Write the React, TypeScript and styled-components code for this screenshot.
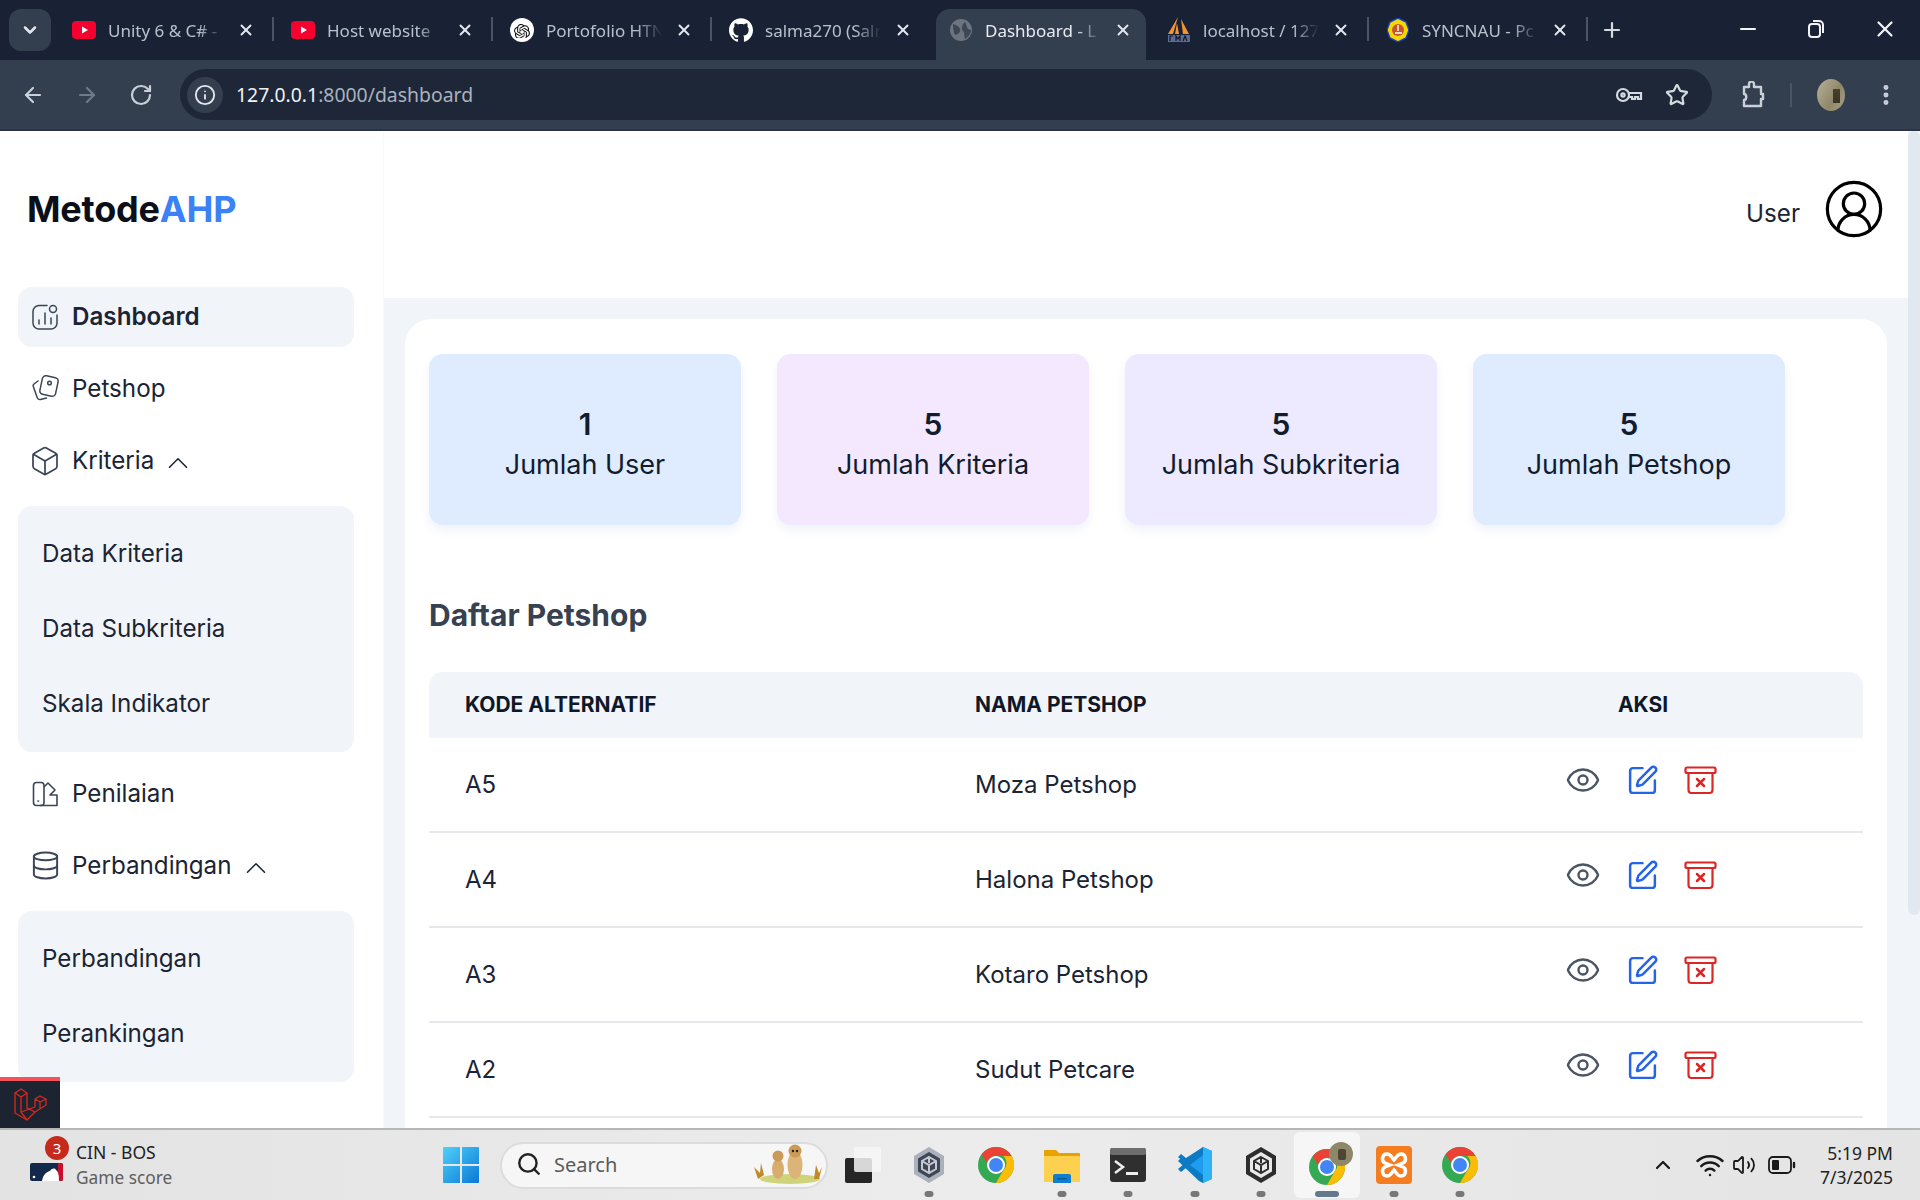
import React from 'react';
import styled, { createGlobalStyle } from 'styled-components';
import {
  ArrowLeft,
  ArrowRight,
  Box,
  ChevronDown,
  ChevronUp,
  CircleUserRound,
  Database,
  EllipsisVertical,
  Eye,
  Info,
  Minus,
  Plus,
  RotateCw,
  Search,
  SquarePen,
  Star,
  Volume2,
  Wifi,
  X,
} from 'lucide-react';
import { SiGithub, SiOpenai } from 'react-icons/si';

const GlobalStyle = createGlobalStyle`
  html, body {
    margin: 0;
    padding: 0;
    width: 1920px;
    height: 1200px;
    overflow: hidden;
    background: #fff;
  }
  * { box-sizing: border-box; }
`;

const Screen = styled.div`
  position: relative;
  width: 1920px;
  height: 1200px;
  display: flex;
  flex-direction: column;
  font-family: Inter, 'Liberation Sans', sans-serif;
  color: #111c2d;
`;

/* browser chrome */
const TabStrip = styled.div`
  height: 60px;
  background: #182234;
  display: flex;
  align-items: flex-end;
  padding-left: 9px;
  flex-shrink: 0;
`;

const TabSearch = styled.div`
  width: 42px;
  height: 42px;
  margin: 0 4px 9px 0;
  border-radius: 12px;
  background: #333e4f;
  color: #e4e8ee;
  display: flex;
  align-items: center;
  justify-content: center;
`;

const Tab = styled.div<{ $active?: boolean; $sep?: boolean }>`
  position: relative;
  width: ${(p) => (p.$active ? '210px' : '219px')};
  height: 51px;
  margin: ${(p) => (p.$active ? '0 4px 0 5px' : '0')};
  padding: ${(p) => (p.$active ? '0 0 9px 13px' : '0 0 9px 17px')};
  display: flex;
  align-items: center;
  color: ${(p) => (p.$active ? '#e8ebf0' : '#b9c0cb')};
  background: ${(p) => (p.$active ? '#333e4f' : 'transparent')};
  border-radius: ${(p) => (p.$active ? '14px 14px 0 0' : '0')};
  font-family: 'Noto Sans', sans-serif;
  font-size: 17px;
  flex-shrink: 0;
  &::after {
    content: '';
    display: ${(p) => (p.$sep ? 'block' : 'none')};
    position: absolute;
    right: 0;
    top: 8px;
    height: 24px;
    width: 2px;
    background: #4a5464;
  }
`;

const TabIcon = styled.span`
  width: 24px;
  height: 24px;
  display: flex;
  align-items: center;
  justify-content: center;
  flex-shrink: 0;
`;

const TabTitle = styled.span`
  width: 116px;
  margin-left: 12px;
  white-space: nowrap;
  overflow: hidden;
  -webkit-mask-image: linear-gradient(to right, #000 78%, transparent 100%);
  mask-image: linear-gradient(to right, #000 78%, transparent 100%);
`;

const TabClose = styled.span`
  margin-left: 13px;
  color: #e4e8ee;
  display: flex;
`;

const NewTab = styled.span`
  margin: 0 0 9px 12px;
  color: #d5dae1;
  height: 42px;
  display: flex;
  align-items: center;
`;

const WindowButtons = styled.div`
  margin-left: auto;
  height: 51px;
  padding: 0 22px 12px 0;
  display: flex;
  align-items: center;
  gap: 46px;
  color: #f2f4f7;
`;

const Toolbar = styled.div`
  height: 71px;
  background: #333e4f;
  display: flex;
  align-items: flex-start;
  padding: 9px 0 0 21px;
  border-bottom: 2px solid #2a3444;
  color: #c9d0da;
  flex-shrink: 0;
`;

const NavIcons = styled.div`
  display: flex;
  align-items: center;
  gap: 30px;
  height: 51px;
  width: 159px;
`;

const Omnibox = styled.div`
  width: 1532px;
  height: 51px;
  border-radius: 26px;
  background: #1d2738;
  display: flex;
  align-items: center;
  padding: 0 23px 0 7px;
`;

const SiteInfo = styled.span`
  width: 36px;
  height: 36px;
  border-radius: 50%;
  background: #333e4f;
  display: flex;
  align-items: center;
  justify-content: center;
  color: #e4e8ee;
  flex-shrink: 0;
`;

const Url = styled.span`
  margin-left: 13px;
  font-family: 'Noto Sans', sans-serif;
  font-size: 19.4px;
  color: #eef1f5;
  span {
    color: #aab2be;
  }
`;

const OmniActions = styled.div`
  margin-left: auto;
  display: flex;
  align-items: center;
  gap: 22px;
  color: #d5dae1;
`;

const ToolActions = styled.div`
  display: flex;
  align-items: center;
  height: 51px;
  margin-left: 29px;
`;

const ToolSep = styled.span`
  width: 2px;
  height: 24px;
  background: #4a5464;
  margin: 0 25px;
`;

const Avatar = styled.span`
  width: 28px;
  height: 32px;
  border-radius: 50%;
  background:
    linear-gradient(to bottom, #4a3f2c, #3a3223) 16px 10px / 7px 14px no-repeat,
    linear-gradient(120deg, #b8b298, #8f876a 60%, #a8a287);
  display: block;
  margin-right: 28px;
`;

/* page */
const Page = styled.div`
  flex: 1;
  min-height: 0;
  display: flex;
  overflow: hidden;
`;

const Sidebar = styled.aside`
  width: 384px;
  flex-shrink: 0;
  padding: 0 29px 0 18px;
  background: #fff;
  border-right: 1px solid #f6f8fb;
`;

const Logo = styled.div`
  height: 156px;
  padding: 0 0 0 9px;
  display: flex;
  align-items: center;
  font-size: 36px;
  font-weight: 700;
  letter-spacing: -0.2px;
  color: #0b0f19;
  span {
    color: #3b82f6;
  }
`;

const Nav = styled.nav`
  display: flex;
  flex-direction: column;
  gap: 12px;
`;

const NavItem = styled.div<{ $active?: boolean }>`
  height: 60px;
  padding: 0 14px 1px;
  display: flex;
  align-items: center;
  gap: 14px;
  border-radius: 14px;
  background: ${(p) => (p.$active ? '#f1f5f9' : 'transparent')};
  font-size: 24.2px;
  font-weight: ${(p) => (p.$active ? 600 : 400)};
  color: #1a2434;
`;

const NavIcon = styled.span`
  width: 26px;
  height: 32px;
  display: flex;
  align-items: center;
  justify-content: center;
  color: #3a4557;
  svg {
    flex-shrink: 0;
  }
`;

const Caret = styled.span`
  display: flex;
  margin: 4px 0 0 -7px;
  color: #1a2434;
`;

const SubPanel = styled.div`
  margin-top: 3px;
  padding: 10px 24px 11px;
  background: #f1f5f9;
  border-radius: 14px;
`;

const SubItem = styled.div`
  height: 75px;
  padding-bottom: 1px;
  display: flex;
  align-items: center;
  font-size: 24.2px;
  color: #1a2434;
`;

const Main = styled.main`
  flex: 1;
  min-width: 0;
  display: flex;
  flex-direction: column;
  background: #f1f5f9;
`;

const Header = styled.header`
  height: 167px;
  flex-shrink: 0;
  background: #fff;
  display: flex;
  align-items: center;
  justify-content: flex-end;
  gap: 22px;
  padding: 0 22px 11px 0;
  color: #000;
`;

const UserName = styled.span`
  margin-top: 8px;
  font-size: 24.2px;
  color: #1a2434;
`;

const Content = styled.div`
  flex: 1;
  min-height: 0;
  padding: 21px 21px 0;
`;

const Card = styled.section`
  background: #fff;
  border-radius: 26px 26px 0 0;
  height: 100%;
  padding: 35px 24px 0;
  overflow: hidden;
`;

const Stats = styled.div`
  display: flex;
  gap: 36px;
`;

const Stat = styled.div<{ $bg: string }>`
  width: 312px;
  height: 171px;
  padding-top: 9px;
  border-radius: 14px;
  background: ${(p) => p.$bg};
  box-shadow: 0 5px 10px rgba(100, 130, 190, 0.1);
  display: flex;
  flex-direction: column;
  align-items: center;
  justify-content: center;
`;

const StatNumber = styled.div`
  font-size: 30px;
  font-weight: 600;
  line-height: 42px;
`;

const StatLabel = styled.div`
  font-size: 27px;
  line-height: 40px;
  color: #111c2d;
`;

const Title = styled.h2`
  margin: 69px 0 0;
  font-size: 30px;
  line-height: 42px;
  font-weight: 700;
  color: #364152;
`;

const Table = styled.div`
  margin-top: 36px;
`;

const Row = styled.div<{ $head?: boolean }>`
  display: grid;
  grid-template-columns: 510px 1fr 440px;
  align-items: center;
  padding: 0 0 ${(p) => (p.$head ? '2px' : '1px')} 36px;
  height: ${(p) => (p.$head ? '66px' : '95px')};
  background: ${(p) => (p.$head ? '#f1f5f9' : '#fff')};
  border-radius: ${(p) => (p.$head ? '14px 14px 0 0' : '0')};
  border-bottom: ${(p) => (p.$head ? '0' : '2px solid #e5e7eb')};
  font-size: ${(p) => (p.$head ? '21px' : '24px')};
  font-weight: ${(p) => (p.$head ? 700 : 400)};
  color: ${(p) => (p.$head ? '#0f1828' : '#1a2434')};
`;

const ActionHead = styled.div`
  text-align: center;
`;

const Actions = styled.div`
  display: flex;
  align-items: center;
  gap: 25px;
  padding-left: 142px;
  margin-top: -8px;
`;

const Scrollbar = styled.div`
  width: 12px;
  flex-shrink: 0;
  background: #f1f5f9;
`;

const ScrollThumb = styled.div`
  height: 784px;
  background: #e2e8f0;
  border-radius: 6px;
`;

/* laravel debugbar badge, sits over the sidebar */
const DebugBadge = styled.div`
  position: absolute;
  left: 0;
  top: 1077px;
  width: 60px;
  height: 51px;
  background: #1c2431;
  border-top: 4px solid #f4525c;
  display: flex;
  align-items: center;
  justify-content: center;
`;

/* windows taskbar */
const Taskbar = styled.footer`
  height: 72px;
  flex-shrink: 0;
  background: linear-gradient(to right, #e3e3e3, #ececec 50%, #e4e4e4);
  border-top: 2px solid #b6b6b6;
  display: flex;
  align-items: center;
  font-family: 'Noto Sans', sans-serif;
`;

const Widget = styled.div`
  width: 443px;
  padding-left: 30px;
  display: flex;
  align-items: center;
  position: relative;
`;

const Badge = styled.span`
  position: absolute;
  left: 45px;
  top: -4px;
  width: 24px;
  height: 24px;
  border-radius: 50%;
  background: #c42b1c;
  color: #fff;
  font-size: 15px;
  display: flex;
  align-items: center;
  justify-content: center;
`;

const WidgetText = styled.div`
  margin-left: 13px;
  font-size: 17.5px;
  line-height: 25px;
  color: #222;
  small {
    display: block;
    font-size: 17.3px;
    color: #5d5d5d;
  }
`;

const SearchBox = styled.div`
  width: 328px;
  height: 47px;
  margin-left: 21px;
  border-radius: 24px;
  background: #f6f6f6;
  border: 2px solid #dcdcdc;
  display: flex;
  align-items: center;
  padding: 0 2px 2px 14px;
  font-size: 20px;
  color: #5a5a5a;
  gap: 12px;
  svg:last-child {
    margin-left: auto;
  }
`;

const Dock = styled.div`
  display: flex;
  margin-left: 2px;
`;

const DockItem = styled.div<{ $active?: boolean }>`
  position: relative;
  width: 66.3px;
  height: 66px;
  display: flex;
  align-items: center;
  justify-content: center;
  border-radius: 6px;
  background: ${(p) => (p.$active ? '#f6f6f6' : 'transparent')};
`;

const DockDot = styled.span<{ $active?: boolean }>`
  position: absolute;
  bottom: 1px;
  left: 50%;
  transform: translateX(-50%);
  width: ${(p) => (p.$active ? '24px' : '9px')};
  height: 6px;
  border-radius: 3px;
  background: ${(p) => (p.$active ? '#64788c' : '#777')};
`;

const Tray = styled.div`
  margin-left: auto;
  display: flex;
  align-items: center;
  padding-right: 27px;
  color: #1a1a1a;
`;

const TrayIcon = styled.span<{ $left: number }>`
  display: flex;
  margin-left: ${(p) => p.$left}px;
`;

const Clock = styled.div`
  margin-left: 24px;
  text-align: right;
  font-size: 17.5px;
  line-height: 24px;
  color: #222;
`;

/* drawn icons */
const Youtube = () => (
  <svg width="24" height="18" viewBox="0 0 24 18">
    <rect width="24" height="18" rx="4" fill="#f5002f" />
    <path d="M10 5.5 16 9l-6 3.5z" fill="#fff" />
  </svg>
);

const OpenAiIcon = () => (
  <svg width="24" height="24" viewBox="0 0 24 24">
    <circle cx="12" cy="12" r="12" fill="#fff" />
    <foreignObject x="4" y="4" width="16" height="16">
      <SiOpenai size={16} color="#111" />
    </foreignObject>
  </svg>
);

const Globe = () => (
  <svg width="24" height="24" viewBox="0 0 24 24">
    <circle cx="12" cy="12" r="11" fill="#6b7480" />
    <path d="M4 6c3 1 6 2 7 5s-2 5-4 6-3-7-3-11zm12-2c2 2 1 5 3 7l3 1c0 4-3 7-6 9-1-3 0-6-2-8s-1-7 2-9z" fill="#3d4654" />
  </svg>
);

const PmaIcon = () => (
  <svg width="24" height="26" viewBox="0 0 24 26">
    <path d="M11 0 6 17H1zM14 2l8 15h-6zM10 6l2 11H8z" fill="#f59331" />
    <rect x="1" y="18" width="22" height="7" fill="#5b6b91" />
    <path d="M3 24v-5h3M9 24v-5l2 3 2-3v5M16 24l2-5 2 5" stroke="#10172a" strokeWidth="1.2" fill="none" />
  </svg>
);

const SyncIcon = () => (
  <svg width="22" height="24" viewBox="0 0 22 24">
    <path d="M11 0 19 4 22 12 19 20 11 24 3 20 0 12 3 4z" fill="#f5d800" stroke="#1a3fc0" strokeWidth="1.4" />
    <circle cx="11" cy="12" r="6" fill="#c9552b" />
    <path d="M8 15h7M11 7v6" stroke="#fff" strokeWidth="1.4" />
  </svg>
);

const RestoreIcon = () => (
  <svg width="20" height="20" viewBox="0 0 20 20" fill="none" stroke="currentColor" strokeWidth="2">
    <rect x="3" y="5" width="11" height="13" rx="3" />
    <path d="M7 2h6a4 4 0 0 1 4 4v8" />
  </svg>
);

const KeyIcon = () => (
  <svg width="28" height="24" viewBox="0 0 28 24" fill="none" stroke="currentColor" strokeWidth="2.2">
    <circle cx="8" cy="12" r="6" />
    <circle cx="8" cy="12" r="1.6" />
    <path d="M14 10h12v6h-3v-2h-3v2h-3v-2h-3" />
  </svg>
);

const PuzzleIcon = () => (
  <svg width="24" height="28" viewBox="0 0 24 28" fill="none" stroke="currentColor" strokeWidth="2.4" strokeLinejoin="round">
    <path d="M3 6h5V3a2 2 0 0 1 5 0v3h7v7h2v5h-2v7H3v-6c3 0 3-6 0-6z" />
  </svg>
);

const DashboardIcon = () => (
  <svg width="26" height="26" viewBox="0 0 26 26" fill="none" stroke="currentColor" strokeWidth="1.5" strokeLinecap="round">
    <path d="M15 1.5H7A6 6 0 0 0 1 7.500V19a6 6 0 0 0 6 6h12a6 6 0 0 0 6-6v-8" />
    <circle cx="21" cy="5" r="3.500" />
    <path d="M7 20v-4M13 20V9M19 20v-6" />
  </svg>
);

const PetshopIcon = () => (
  <svg width="27" height="27" viewBox="0 0 27 27" fill="none" stroke="currentColor" strokeWidth="1.5" strokeLinejoin="round">
    <rect x="9" y="1.500" width="16" height="19" rx="3.500" transform="rotate(12 17 11)" />
    <circle cx="17.500" cy="8" r="1.800" />
    <path d="M6 6 2 9a2.500 2.500 0 0 0-.5 3L5 22a3 3 0 0 0 3.500 2.500l6-1.500" strokeLinecap="round" />
  </svg>
);

const PenilaianIcon = () => (
  <svg width="26" height="26" viewBox="0 0 26 26" fill="none" stroke="currentColor" strokeWidth="1.6" strokeLinejoin="round">
    <rect x="1.500" y="1.500" width="10.500" height="23" rx="3" />
    <path d="M12 6l4-4 7 7-5 5h7v10.500H8" />
    <path d="M6 20h.5" strokeLinecap="round" />
  </svg>
);

const TrashIcon = () => (
  <svg width="33" height="29" viewBox="0 0 33 29" fill="none" stroke="#dc2626" strokeWidth="2.200" strokeLinejoin="round" strokeLinecap="round">
    <rect x="1.500" y="1.500" width="30" height="5.500" rx="1.500" />
    <path d="M4.500 7v17a3 3 0 0 0 3 3h18a3 3 0 0 0 3-3V7" />
    <path d="M13 13l7 7M20 13l-7 7" strokeWidth="2.500" />
  </svg>
);

const LaravelIcon = () => (
  <svg width="33" height="33" viewBox="0 0 33 33" fill="none" stroke="#d9291c" strokeWidth="1.300" strokeLinejoin="round">
    <path d="M1 5l6-4 6 4v15l8 4-8 8-12-7z" />
    <path d="M1 5l6 4 6-4M7 9v15l6 8M7 24l14-5" />
    <path d="M21 11l5-3 6 3v6l-11 7M21 11l5 3 6-3M26 14v6M21 11v8" />
  </svg>
);

const MlbIcon = () => (
  <svg width="33" height="18" viewBox="0 0 33 18" style={{ marginTop: 14 }}>
    <rect width="33" height="18" rx="2" fill="#13294b" />
    <path d="M28 0h3a2 2 0 0 1 2 2v14a2 2 0 0 1-2 2h-3z" fill="#c8102e" />
    <path d="M12 18c1-6 4-9 8-10 2-3 5-3 6-1 2 1 3 5 3 11z" fill="#fff" />
    <circle cx="4" cy="14" r="1.300" fill="#fff" />
  </svg>
);

const WindowsLogo = () => (
  <svg width="36" height="36" viewBox="0 0 36 36">
    <defs>
      <linearGradient id="win" x1="0" y1="0" x2="1" y2="1">
        <stop offset="0" stopColor="#4fd0fb" />
        <stop offset="1" stopColor="#0a78d6" />
      </linearGradient>
    </defs>
    <path d="M0 1a1 1 0 0 1 1-1h16v17H0zM19 0h16a1 1 0 0 1 1 1v16H19zM0 19h17v17H1a1 1 0 0 1-1-1zM19 19h17v16a1 1 0 0 1-1 1H19z" fill="url(#win)" />
  </svg>
);

const Meerkats = () => (
  <svg width="72" height="42" viewBox="0 0 72 42">
    <ellipse cx="38" cy="36" rx="30" ry="5" fill="#cfd47a" />
    <path d="M6 36 2 24l6 6 1-10 3 12zM62 36l2-14 3 8 3-6-3 12z" fill="#c08a26" />
    <ellipse cx="26" cy="26" rx="6" ry="10" fill="#d7ac6d" />
    <circle cx="26" cy="13" r="5.500" fill="#cb9a58" />
    <ellipse cx="43" cy="22" rx="7.500" ry="14" fill="#dcb477" />
    <circle cx="43" cy="8" r="6.500" fill="#cb9a58" />
    <circle cx="41" cy="8" r="1.200" fill="#222" />
    <circle cx="45" cy="8" r="1.200" fill="#222" />
  </svg>
);

const StoreIcon = () => (
  <svg width="36" height="36" viewBox="0 0 36 36">
    <rect x="0" y="11" width="27" height="25" rx="2" fill="#262626" />
    <rect x="9" y="0" width="27" height="25" rx="2" fill="#f7f7f7" opacity="0.85" />
  </svg>
);

const UnityIcon = ({ dark }: { dark?: boolean }) => (
  <svg width="32" height="36" viewBox="0 0 32 36">
    <path d="M16 0 31 9v18L16 36 1 27V9z" fill={dark ? '#2d2d2d' : '#aab1bc'} />
    <path d="M16 5 27 11.500v13L16 31 5 24.500v-13z" fill={dark ? '#e9e9e9' : '#3f4757'} />
    <path d="M16 10l7 4v8l-7 4-7-4v-8zM16 10v6M9 14l7 4 7-4M16 18v8" fill="none" stroke={dark ? '#2d2d2d' : '#c5cad2'} strokeWidth="2" />
  </svg>
);

const ChromeIcon = () => (
  <svg width="36" height="38" viewBox="0 0 36 36">
    <circle cx="18" cy="18" r="18" fill="#34a853" />
    <path d="M18 0a18 18 0 0 1 15.600 9H18a9 9 0 0 0-8.800 7L3.500 7.500A18 18 0 0 1 18 0z" fill="#ea4335" />
    <path d="M33.600 9A18 18 0 0 1 18 36l7.800-13.500A9 9 0 0 0 25 9z" fill="#fbbc04" />
    <circle cx="18" cy="18" r="9" fill="#fff" />
    <circle cx="18" cy="18" r="7" fill="#4285f4" />
  </svg>
);

/* profile picture that sits on the active chrome icon */
const ChromeWithProfile = () => (
  <svg width="52" height="46" viewBox="0 0 52 46">
    <g transform="translate(8 7)">
      <circle cx="18" cy="18" r="18" fill="#34a853" />
      <path d="M18 0a18 18 0 0 1 15.600 9H18a9 9 0 0 0-8.800 7L3.500 7.500A18 18 0 0 1 18 0z" fill="#ea4335" />
      <path d="M33.600 9A18 18 0 0 1 18 36l7.800-13.500A9 9 0 0 0 25 9z" fill="#fbbc04" />
      <circle cx="18" cy="18" r="9" fill="#fff" />
      <circle cx="18" cy="18" r="7" fill="#4285f4" />
    </g>
    <circle cx="40" cy="12" r="12" fill="#8f876a" />
    <rect x="37" y="7" width="8" height="11" rx="2" fill="#4f4632" />
  </svg>
);

const FolderIcon = () => (
  <svg width="36" height="36" viewBox="0 0 36 36">
    <path d="M0 4a1 1 0 0 1 1-1h11l3 3h20a1 1 0 0 1 1 1v4H0z" fill="#e8a200" />
    <path d="M0 9h35a1 1 0 0 1 1 1v25H0z" fill="#fdd04f" />
    <path d="M9 36v-7a2 2 0 0 1 2-2h14a2 2 0 0 1 2 2v7z" fill="#0f7ed0" />
    <rect x="13" y="31" width="10" height="1.500" fill="#0a5a9a" />
  </svg>
);

const TerminalIcon = () => (
  <svg width="36" height="36" viewBox="0 0 36 36">
    <rect width="36" height="34" y="1" rx="3" fill="#2f2f2f" />
    <rect x="0" y="1" width="36" height="7" rx="2" fill="#6e6e6e" />
    <path d="M5 14l8 6-8 6" stroke="#eee" strokeWidth="2.500" fill="none" />
    <rect x="16" y="25" width="12" height="3" fill="#eee" />
  </svg>
);

const VsCodeIcon = () => (
  <svg width="36" height="38" viewBox="0 0 36 38">
    <path d="M26 1 11 19l15 18 9-4V5z" fill="#1f9cf0" />
    <path d="M26 1v36l9-4V5z" fill="#2fb3f7" />
    <path d="M26 9 9 22l-5 4-3-3 7-6-7-6 3-3 5 4L26 1z" fill="#0d7ac4" />
    <path d="M26 29 4 12 1 15l21 20 4 2z" fill="#0d7ac4" />
  </svg>
);

const XamppIcon = () => (
  <svg width="36" height="38" viewBox="0 0 36 38">
    <rect width="36" height="38" rx="4" fill="#f57c1f" />
    <path d="M11 8c-5 0-6 7-2 9l5 2-5 2c-4 2-3 9 2 9 4 0 5-4 7-6 2 2 3 6 7 6 5 0 6-7 2-9l-5-2 5-2c4-2 3-9-2-9-4 0-5 4-7 6-2-2-3-6-7-6z" fill="none" stroke="#fff" strokeWidth="3.500" />
  </svg>
);

const BatteryIcon = () => (
  <svg width="28" height="20" viewBox="0 0 28 20" fill="none" stroke="currentColor" strokeWidth="1.800">
    <rect x="1" y="2" width="22" height="16" rx="4" />
    <rect x="4" y="5" width="7" height="10" rx="1" fill="currentColor" stroke="none" />
    <path d="M26 8v4" strokeLinecap="round" strokeWidth="2.400" />
  </svg>
);

type TabData = { icon: React.ReactNode; title: string; active?: boolean; sep?: boolean };

const tabs: TabData[] = [
  { icon: <Youtube />, title: 'Unity 6 & C# -', sep: true },
  { icon: <Youtube />, title: 'Host website', sep: true },
  { icon: <OpenAiIcon />, title: 'Portofolio HTN', sep: true },
  { icon: <SiGithub size={24} color="#fff" />, title: 'salma270 (Salr' },
  { icon: <Globe />, title: 'Dashboard - L', active: true },
  { icon: <PmaIcon />, title: 'localhost / 127', sep: true },
  { icon: <SyncIcon />, title: 'SYNCNAU - Pc', sep: true },
];

const stats = [
  { value: 1, label: 'Jumlah User', bg: '#dfebfe' },
  { value: 5, label: 'Jumlah Kriteria', bg: '#f3e8fe' },
  { value: 5, label: 'Jumlah Subkriteria', bg: '#ede9fe' },
  { value: 5, label: 'Jumlah Petshop', bg: '#dfebfe' },
];

const petshops = [
  { code: 'A5', name: 'Moza Petshop' },
  { code: 'A4', name: 'Halona Petshop' },
  { code: 'A3', name: 'Kotaro Petshop' },
  { code: 'A2', name: 'Sudut Petcare' },
];

const dock = [
  { icon: <StoreIcon /> },
  { icon: <UnityIcon />, dot: true },
  { icon: <ChromeIcon /> },
  { icon: <FolderIcon />, dot: true },
  { icon: <TerminalIcon />, dot: true },
  { icon: <VsCodeIcon />, dot: true },
  { icon: <UnityIcon dark />, dot: true },
  { icon: <ChromeWithProfile />, dot: true, active: true },
  { icon: <XamppIcon />, dot: true },
  { icon: <ChromeIcon />, dot: true },
];

const App = () => {
  return (
    <Screen>
      <GlobalStyle />
      <TabStrip>
        <TabSearch>
          <ChevronDown size={20} strokeWidth={3} />
        </TabSearch>
        {tabs.map((t) => (
          <Tab key={t.title} $active={t.active} $sep={t.sep}>
            <TabIcon>{t.icon}</TabIcon>
            <TabTitle>{t.title}</TabTitle>
            <TabClose>
              <X size={18} strokeWidth={2.5} />
            </TabClose>
          </Tab>
        ))}
        <NewTab>
          <Plus size={24} strokeWidth={2.2} />
        </NewTab>
        <WindowButtons>
          <Minus size={24} strokeWidth={2} />
          <RestoreIcon />
          <X size={26} strokeWidth={2} />
        </WindowButtons>
      </TabStrip>
      <Toolbar>
        <NavIcons>
          <ArrowLeft size={24} strokeWidth={2.2} />
          <ArrowRight size={24} strokeWidth={2.2} color="#6f7a89" />
          <RotateCw size={24} strokeWidth={2.2} />
        </NavIcons>
        <Omnibox>
          <SiteInfo>
            <Info size={22} strokeWidth={2} />
          </SiteInfo>
          <Url>
            127.0.0.1<span>:8000/dashboard</span>
          </Url>
          <OmniActions>
            <KeyIcon />
            <Star size={24} strokeWidth={2.2} />
          </OmniActions>
        </Omnibox>
        <ToolActions>
          <PuzzleIcon />
          <ToolSep />
          <Avatar />
          <EllipsisVertical size={26} strokeWidth={2.6} />
        </ToolActions>
      </Toolbar>
      <Page>
        <Sidebar>
          <Logo>
            Metode<span>AHP</span>
          </Logo>
          <Nav>
            <NavItem $active>
              <NavIcon>
                <DashboardIcon />
              </NavIcon>
              Dashboard
            </NavItem>
            <NavItem>
              <NavIcon>
                <PetshopIcon />
              </NavIcon>
              Petshop
            </NavItem>
            <NavItem>
              <NavIcon>
                <Box size={32} strokeWidth={1.3} />
              </NavIcon>
              Kriteria
              <Caret>
                <ChevronUp size={34} strokeWidth={1.1} />
              </Caret>
            </NavItem>
            <SubPanel>
              <SubItem>Data Kriteria</SubItem>
              <SubItem>Data Subkriteria</SubItem>
              <SubItem>Skala Indikator</SubItem>
            </SubPanel>
            <NavItem>
              <NavIcon>
                <PenilaianIcon />
              </NavIcon>
              Penilaian
            </NavItem>
            <NavItem>
              <NavIcon>
                <Database size={31} strokeWidth={1.5} />
              </NavIcon>
              Perbandingan
              <Caret>
                <ChevronUp size={34} strokeWidth={1.1} />
              </Caret>
            </NavItem>
            <SubPanel>
              <SubItem>Perbandingan</SubItem>
              <SubItem>Perankingan</SubItem>
            </SubPanel>
          </Nav>
        </Sidebar>
        <Main>
          <Header>
            <UserName>User</UserName>
            <CircleUserRound size={64} strokeWidth={1.2} />
          </Header>
          <Content>
            <Card>
              <Stats>
                {stats.map((s) => (
                  <Stat key={s.label} $bg={s.bg}>
                    <StatNumber>{s.value}</StatNumber>
                    <StatLabel>{s.label}</StatLabel>
                  </Stat>
                ))}
              </Stats>
              <Title>Daftar Petshop</Title>
              <Table>
                <Row $head>
                  <div>KODE ALTERNATIF</div>
                  <div>NAMA PETSHOP</div>
                  <ActionHead>AKSI</ActionHead>
                </Row>
                {petshops.map((p) => (
                  <Row key={p.code}>
                    <div>{p.code}</div>
                    <div>{p.name}</div>
                    <Actions>
                      <Eye size={36} strokeWidth={1.6} color="#4b5563" />
                      <SquarePen size={33} strokeWidth={1.8} color="#2563eb" />
                      <TrashIcon />
                    </Actions>
                  </Row>
                ))}
              </Table>
            </Card>
          </Content>
        </Main>
        <Scrollbar>
          <ScrollThumb />
        </Scrollbar>
      </Page>
      <DebugBadge>
        <LaravelIcon />
      </DebugBadge>
      <Taskbar>
        <Widget>
          <MlbIcon />
          <Badge>3</Badge>
          <WidgetText>
            CIN - BOS
            <small>Game score</small>
          </WidgetText>
        </Widget>
        <WindowsLogo />
        <SearchBox>
          <Search size={26} strokeWidth={2.2} color="#222" />
          Search
          <Meerkats />
        </SearchBox>
        <Dock>
          {dock.map((d, i) => (
            <DockItem key={i} $active={d.active}>
              {d.icon}
              {d.dot && <DockDot $active={d.active} />}
            </DockItem>
          ))}
        </Dock>
        <Tray>
          <ChevronUp size={24} strokeWidth={2.2} />
          <TrayIcon $left={20}>
            <Wifi size={30} strokeWidth={2} />
          </TrayIcon>
          <TrayIcon $left={7}>
            <Volume2 size={24} strokeWidth={1.8} />
          </TrayIcon>
          <TrayIcon $left={12}>
            <BatteryIcon />
          </TrayIcon>
          <Clock>
            5:19 PM
            <br />
            7/3/2025
          </Clock>
        </Tray>
      </Taskbar>
    </Screen>
  );
};

export default App;
